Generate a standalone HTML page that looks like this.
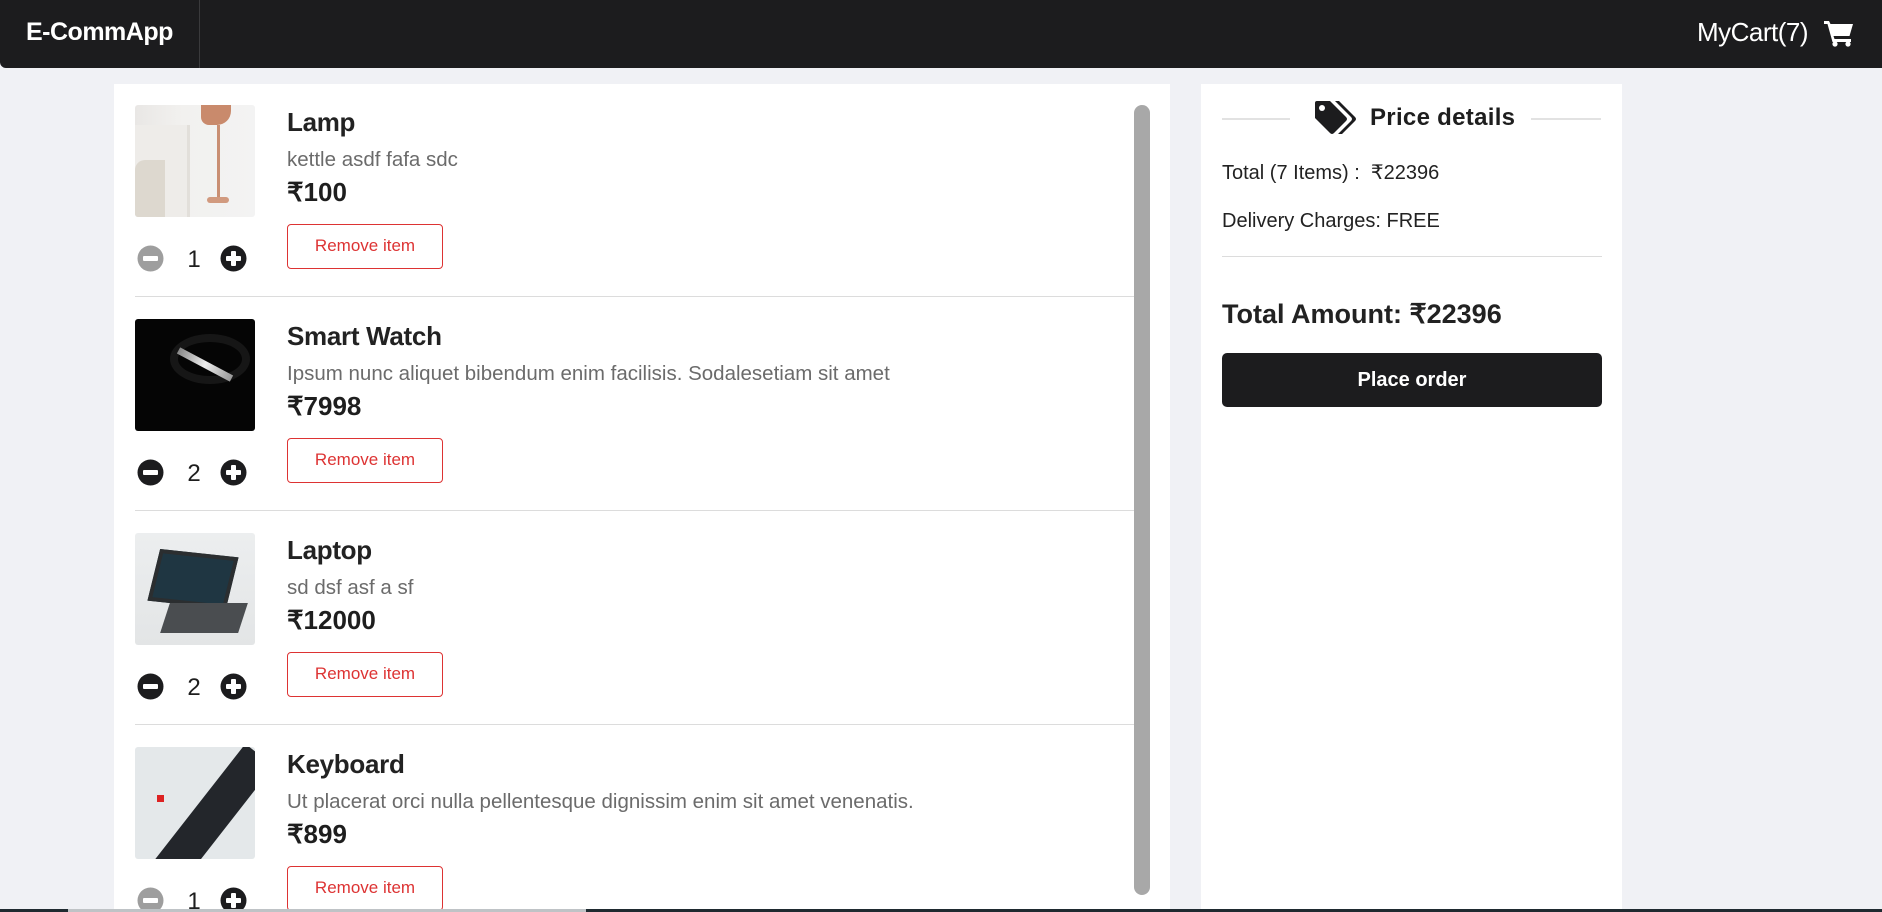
<!DOCTYPE html>
<html><head><meta charset="utf-8"><style>
*{box-sizing:border-box;margin:0;padding:0}
html,body{width:1882px;height:912px;overflow:hidden}
body{background:#f0f1f5;font-family:"Liberation Sans",sans-serif;color:#1e1e1e;position:relative}
.nav{position:absolute;left:0;top:0;width:1882px;height:68px;background:#1c1c1e;border-radius:0 0 0 6px}
.logo{position:absolute;left:26px;top:18px;color:#fff;font-size:25px;font-weight:bold;letter-spacing:-0.5px}
.vdiv{position:absolute;left:199px;top:0;width:1px;height:68px;background:#3a3a3c}
.cart{position:absolute;left:1697px;top:17px;color:#fff;font-size:26px;letter-spacing:-0.5px}
.cart svg{position:absolute;left:127px;top:2px}
.left{position:absolute;left:114px;top:84px;width:1056px;height:828px;background:#fff;overflow:hidden}
.right{position:absolute;left:1201px;top:84px;width:421px;height:828px;background:#fff}
.item{position:absolute;left:21px;width:999px;height:214px}
.img{position:absolute;left:0;top:0;width:120px;height:112px;border-radius:3px;overflow:hidden}
.t{position:absolute;left:152px;top:2px;font-size:26px;font-weight:bold;color:#222;letter-spacing:-0.3px}
.d{position:absolute;left:152px;top:43px;font-size:20.5px;color:#6b6b6b}
.p{position:absolute;left:152px;top:72px;font-size:26px;font-weight:bold;color:#1e1e1e}
.btn{position:absolute;left:152px;top:119px;width:156px;height:45px;border:1.5px solid #d33;border-radius:4px;color:#d33;font-size:17px;text-align:center;line-height:42px}
.q{position:absolute;top:138px;left:0;width:140px;height:32px}
.q .n{position:absolute;left:49px;top:3px;font-size:24px;width:20px;text-align:center}
.hr{position:absolute;left:0;top:191px;width:999px;height:1px;background:#dcdcdc}
.sb{position:absolute;left:1020px;top:21px;width:16px;height:790px;background:#a8a8a8;border-radius:8px}
.lnl{position:absolute;top:34px;height:2px;background:#e2e2e2}
.ph{position:absolute;left:169px;top:20px;font-size:24px;font-weight:bold;letter-spacing:0.3px}
.r1{position:absolute;left:21px;font-size:20px;color:#222}
.po{position:absolute;left:21px;top:269px;width:380px;height:54px;background:#1c1c1e;border-radius:5px;color:#fff;font-size:20px;font-weight:bold;text-align:center;line-height:54px}
</style></head><body>
<div class="nav"><div class="logo">E-CommApp</div><div class="vdiv"></div>
<div class="cart">MyCart(7)<svg width="30" height="28" viewBox="0 0 30 28"><path d="M0 2h5l1.5 3H29l-3.5 12H9.5l1 3H27v3H8.5L3.5 5H0z" fill="#fff"/><circle cx="11" cy="25" r="2.6" fill="#fff"/><circle cx="24" cy="25" r="2.6" fill="#fff"/></svg></div></div>

<div class="left">
<div class="item" style="top:21px">
<div class="img" style="background:linear-gradient(90deg,#e9e7e5 0,#f2f1ef 40%,#f3f3f3 100%)"><div style="position:absolute;left:0;top:20px;width:55px;height:92px;background:#eeece9;border-right:3px solid #e2dfda"></div><div style="position:absolute;left:0;top:55px;width:30px;height:57px;background:#ddd8cf;border-radius:10px 0 0 0"></div><div style="position:absolute;left:66px;top:0;width:30px;height:20px;background:#c98a6c;border-radius:0 0 14px 8px"></div><div style="position:absolute;left:82px;top:20px;width:3px;height:75px;background:#c98f73"></div><div style="position:absolute;left:72px;top:92px;width:22px;height:6px;background:#d19a7f;border-radius:3px"></div></div>
<div class="t">Lamp</div><div class="d">kettle asdf fafa sdc</div><div class="p">₹100</div><div class="btn">Remove item</div>
<div class="q"><svg style="position:absolute;left:2px;top:2px" width="27" height="27"><circle cx="13.5" cy="13.5" r="13" fill="#9e9e9e"/><rect x="6" y="11" width="15" height="5" rx="1" fill="#fff"/></svg><div class="n">1</div><svg style="position:absolute;left:85px;top:2px" width="27" height="27"><circle cx="13.5" cy="13.5" r="13" fill="#1c1c1e"/><rect x="6" y="11" width="15" height="5" rx="1" fill="#fff"/><rect x="11" y="6" width="5" height="15" rx="1" fill="#fff"/></svg></div>
<div class="hr"></div></div>

<div class="item" style="top:235px">
<div class="img" style="background:#050505"><div style="position:absolute;left:35px;top:15px;width:80px;height:50px;border:8px solid #161616;border-radius:50%"></div><div style="position:absolute;left:40px;top:42px;width:60px;height:7px;background:linear-gradient(90deg,#888,#eee,#999);transform:rotate(28deg)"></div></div>
<div class="t">Smart Watch</div><div class="d">Ipsum nunc aliquet bibendum enim facilisis. Sodalesetiam sit amet</div><div class="p">₹7998</div><div class="btn">Remove item</div>
<div class="q"><svg style="position:absolute;left:2px;top:2px" width="27" height="27"><circle cx="13.5" cy="13.5" r="13" fill="#1c1c1e"/><rect x="6" y="11" width="15" height="5" rx="1" fill="#fff"/></svg><div class="n">2</div><svg style="position:absolute;left:85px;top:2px" width="27" height="27"><circle cx="13.5" cy="13.5" r="13" fill="#1c1c1e"/><rect x="6" y="11" width="15" height="5" rx="1" fill="#fff"/><rect x="11" y="6" width="5" height="15" rx="1" fill="#fff"/></svg></div>
<div class="hr"></div></div>

<div class="item" style="top:449px">
<div class="img" style="background:linear-gradient(180deg,#eceeef,#e3e5e6)"><div style="position:absolute;left:18px;top:20px;width:80px;height:52px;background:#1f3642;border:4px solid #2b2e30;transform:skewX(-8deg) rotate(6deg)"></div><div style="position:absolute;left:30px;top:70px;width:78px;height:30px;background:#4a4d50;transform:skewX(-18deg)"></div></div>
<div class="t">Laptop</div><div class="d">sd dsf asf a sf</div><div class="p">₹12000</div><div class="btn">Remove item</div>
<div class="q"><svg style="position:absolute;left:2px;top:2px" width="27" height="27"><circle cx="13.5" cy="13.5" r="13" fill="#1c1c1e"/><rect x="6" y="11" width="15" height="5" rx="1" fill="#fff"/></svg><div class="n">2</div><svg style="position:absolute;left:85px;top:2px" width="27" height="27"><circle cx="13.5" cy="13.5" r="13" fill="#1c1c1e"/><rect x="6" y="11" width="15" height="5" rx="1" fill="#fff"/><rect x="11" y="6" width="5" height="15" rx="1" fill="#fff"/></svg></div>
<div class="hr"></div></div>

<div class="item" style="top:663px">
<div class="img" style="background:#e4e8ea"><div style="position:absolute;width:150px;height:36px;background:#23262b;transform:rotate(-52deg);transform-origin:0 0;left:18px;top:115px"></div><div style="position:absolute;left:22px;top:48px;width:7px;height:7px;background:#d22"></div></div>
<div class="t">Keyboard</div><div class="d">Ut placerat orci nulla pellentesque dignissim enim sit amet venenatis.</div><div class="p">₹899</div><div class="btn">Remove item</div>
<div class="q"><svg style="position:absolute;left:2px;top:2px" width="27" height="27"><circle cx="13.5" cy="13.5" r="13" fill="#9e9e9e"/><rect x="6" y="11" width="15" height="5" rx="1" fill="#fff"/></svg><div class="n">1</div><svg style="position:absolute;left:85px;top:2px" width="27" height="27"><circle cx="13.5" cy="13.5" r="13" fill="#1c1c1e"/><rect x="6" y="11" width="15" height="5" rx="1" fill="#fff"/><rect x="11" y="6" width="5" height="15" rx="1" fill="#fff"/></svg></div>
</div>
<div class="sb"></div>
</div>

<div class="right">
<div class="lnl" style="left:21px;width:68px"></div><div class="lnl" style="left:330px;width:70px"></div>
<svg style="position:absolute;left:112px;top:16px" width="46" height="36" viewBox="0 0 46 36"><path d="M2 3Q2 1 4 1H17L33 17Q35 19 33 21L21 33Q19 35 17 33L2 18Z" fill="#1c1c1e"/><circle cx="9" cy="8" r="3" fill="#fff"/><path d="M22 1H26L42 17Q44 19 42 21L29 34H25L38 21Q40 19 38 17Z" fill="#1c1c1e"/></svg>
<div class="ph">Price details</div>
<div class="r1" style="top:76px">Total (7 Items) :&nbsp; ₹22396</div>
<div class="r1" style="top:126px">Delivery Charges: FREE</div>
<div style="position:absolute;left:21px;top:172px;width:380px;height:1px;background:#dcdcdc"></div>
<div class="r1" style="top:215px;font-size:27px;font-weight:bold">Total Amount: ₹22396</div>
<div class="po">Place order</div>
</div>
<div style="position:absolute;left:0;top:909px;width:1882px;height:3px;background:#1f2a30"></div>
<div style="position:absolute;left:68px;top:909px;width:518px;height:3px;background:#bfc3c6"></div>
</body></html>
